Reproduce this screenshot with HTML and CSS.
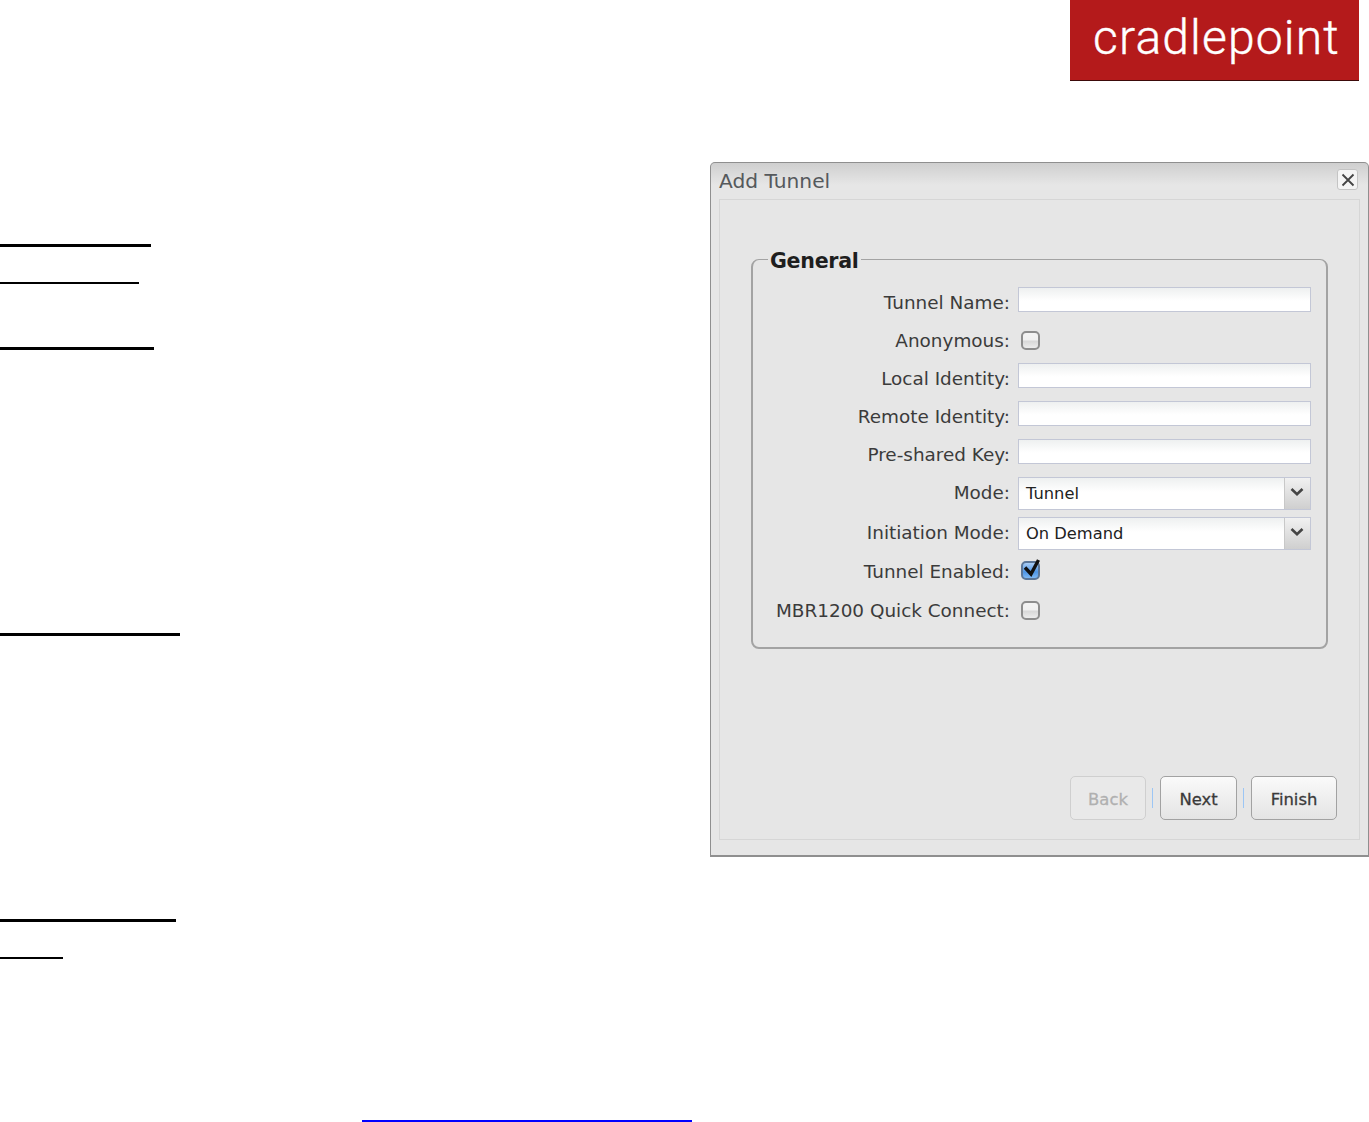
FILE: index.html
```html
<!DOCTYPE html>
<html lang="en">
<head>
<meta charset="utf-8">
<title>Add Tunnel</title>
<link rel="stylesheet" href="styles.css">
</head>
<body>
<header class="top">
  <div class="logo"><span class="logo-text">cradlepoint</span></div>
</header>
<main class="main">
  <div class="rules">
    <div class="rule r1"></div>
    <div class="rule r2"></div>
    <div class="rule r3"></div>
    <div class="rule r4"></div>
    <div class="rule r5"></div>
    <div class="rule r6"></div>
  </div>
  <section class="dialog">
    <div class="titlebar">
      <span class="title">Add Tunnel</span>
      <button class="close" type="button" aria-label="Close">
        <svg width="14" height="14" viewBox="0 0 14 14"><path d="M1.5 1.5 12.5 12.5M12.5 1.5 1.5 12.5" stroke="#444" stroke-width="1.8" fill="none"/></svg>
      </button>
    </div>
    <div class="panel">
      <fieldset class="group">
        <legend>General</legend>
        <div class="row"><label>Tunnel Name:</label><div class="ctl"><div class="input"></div></div></div>
        <div class="row"><label>Anonymous:</label><div class="ctl"><span class="check"></span></div></div>
        <div class="row"><label>Local Identity:</label><div class="ctl"><div class="input"></div></div></div>
        <div class="row"><label>Remote Identity:</label><div class="ctl"><div class="input"></div></div></div>
        <div class="row"><label>Pre-shared Key:</label><div class="ctl"><div class="input"></div></div></div>
        <div class="row row-sel"><label>Mode:</label><div class="ctl">
          <div class="select"><span class="sel-text">Tunnel</span><span class="sel-btn"><svg width="16" height="10" viewBox="0 0 16 10"><path d="M2.5 2 8 7.2 13.5 2" stroke="#444" stroke-width="2.6" fill="none"/></svg></span></div>
        </div></div>
        <div class="row row-sel2"><label>Initiation Mode:</label><div class="ctl">
          <div class="select"><span class="sel-text">On Demand</span><span class="sel-btn"><svg width="16" height="10" viewBox="0 0 16 10"><path d="M2.5 2 8 7.2 13.5 2" stroke="#444" stroke-width="2.6" fill="none"/></svg></span></div>
        </div></div>
        <div class="row row-sel2"><label>Tunnel Enabled:</label><div class="ctl">
          <span class="check on"><svg class="tick" width="20" height="24" viewBox="0 0 20 24"><path d="M3 11.5 9 18 16.5 4" stroke="#111" stroke-width="3.4" fill="none"/></svg></span>
        </div></div>
        <div class="row"><label>MBR1200 Quick Connect:</label><div class="ctl"><span class="check"></span></div></div>
      </fieldset>
      <div class="footer">
        <button class="btn btn-back" type="button" disabled>Back</button>
        <span class="sep"></span>
        <button class="btn btn-next" type="button">Next</button>
        <span class="sep"></span>
        <button class="btn btn-finish" type="button">Finish</button>
      </div>
    </div>
  </section>
</main>
<div class="linkrow"><a class="link" href="#"></a></div>
</body>
</html>
```
FILE: styles.css
```css
* { box-sizing: border-box; }
html, body { margin: 0; padding: 0; }
body {
  width: 1369px;
  height: 1122px;
  overflow: hidden;
  background: #fff;
  font-family: "DejaVu Sans", sans-serif;
}

/* header */
.top { display: flex; justify-content: flex-end; padding-right: 10px; height: 81px; }
.logo {
  width: 289px;
  height: 81px;
  padding-left: 4px;
  background: #b41a1b;
  border-bottom: 1px solid #3c0a0a;
  display: flex;
  justify-content: center;
  align-items: flex-start;
}
.logo-text {
  font-family: "Roboto", sans-serif;
  font-weight: 300;
  font-size: 48px;
  line-height: 75px;
  letter-spacing: 1.15px;
  color: #fff;
  -webkit-text-stroke: 0.4px #fff;
}

/* layout */
.main { display: flex; margin-top: 81px; align-items: flex-start; }
.rules { width: 710px; display: flex; flex-direction: column; }
.rule { background: #000; height: 3px; }
.r1 { width: 151px; margin-top: 82px; }
.r2 { width: 139px; margin-top: 35px; height: 2px; }
.r3 { width: 154px; margin-top: 63px; }
.r4 { width: 180px; margin-top: 283px; }
.r5 { width: 176px; margin-top: 283px; }
.r6 { width: 63px; margin-top: 35px; height: 2px; }

/* dialog */
.dialog {
  width: 659px;
  height: 695px;
  border: 1px solid #8f8f8f;
  border-bottom-width: 2px;
  border-radius: 5px 5px 0 0;
  background: linear-gradient(#cfcfcf 0, #e6e6e6 22px);
  display: flex;
  flex-direction: column;
}
.titlebar {
  height: 36px;
  padding: 6px 10px 0 8px;
  display: flex;
  justify-content: space-between;
  align-items: flex-start;
}
.title { font-size: 20.2px; line-height: 25px; color: #55595c; }
.close {
  width: 21px;
  height: 21px;
  padding: 0;
  border: 1px solid #c4c4c4;
  border-radius: 3px;
  background: #f4f4f4;
  display: flex;
  align-items: center;
  justify-content: center;
}
.panel {
  flex: 1;
  margin: 0 8px 15px;
  border: 1px solid #d6d6d6;
  padding: 44px 0 19px;
  display: flex;
  flex-direction: column;
}

/* fieldset */
.group {
  margin: 0 31px 0 31px;
  padding: 13px 15px 14px 0;
  border: 2px solid #a3a3a3;
  border-top-width: 1px;
  border-radius: 8px;
  min-width: 0;
}
.group legend {
  margin-left: 15px;
  padding: 4px 2px 0;
  font-size: 20.6px;
  line-height: 26px;
  font-weight: 700;
  color: #1e1e1e;
  letter-spacing: -0.3px;
}
.row { display: flex; height: 38px; align-items: flex-start; }
.row-sel { height: 40px; }
.row-sel2 { height: 39px; }
.row label {
  flex: 1;
  text-align: right;
  font-size: 18.4px;
  line-height: 32px;
  color: #3b3b3b;
  white-space: nowrap;
}
.ctl { width: 293px; margin-left: 8px; display: flex; align-items: flex-start; }
.input {
  width: 100%;
  height: 25px;
  border: 1px solid #c3c7d6;
  background: linear-gradient(#eef0f0, #fff 55%);
}
.check {
  position: relative;
  width: 19px;
  height: 19px;
  margin: 6px 0 0 3px;
  border: 2px solid #8d8d8d;
  border-radius: 5px;
  background: linear-gradient(#f3f3f3, #f0f0f0 45%, #d8d8d8 55%, #ececec);
}
.check.on {
  margin-top: 5px;
  border-color: #5b7698;
  background: linear-gradient(#a9cdf5, #4e95e6 60%, #7db8f4);
}
.tick { position: absolute; left: -1px; top: -7px; }
.select {
  width: 100%;
  height: 33px;
  border: 1px solid #c3c7d6;
  display: flex;
  background: linear-gradient(#eef0f0, #fff 45%);
}
.sel-text {
  flex: 1;
  padding-left: 7px;
  font-size: 16.3px;
  line-height: 32px;
  color: #222;
}
.sel-btn {
  width: 26px;
  border-left: 1px solid #c8c8c8;
  background: linear-gradient(#f1f1f1, #cfcfcf);
  display: flex;
  justify-content: center;
  padding: 9px 2px 0 0;
}

/* footer buttons */
.footer {
  margin-top: auto;
  padding-right: 22px;
  display: flex;
  justify-content: flex-end;
  align-items: center;
}
.btn {
  height: 44px;
  padding: 2px 0 0;
  border: 1px solid #a2a2a2;
  border-radius: 5px;
  background: linear-gradient(#fafafa, #e4e4e4);
  font-family: "DejaVu Sans", sans-serif;
  font-size: 16.4px;
  color: #3a3a3a;
  -webkit-text-stroke: 0.3px #3a3a3a;
}
.btn-back { width: 76px; border-color: #cfcfcf; background: #e9e9e9; color: #b0b0b0; -webkit-text-stroke: 0.3px #b0b0b0; }
.btn-next { width: 77px; }
.btn-finish { width: 86px; }
.sep { width: 1px; height: 20px; margin: 0 7px 0 6px; background: #9cc6f5; }

/* bottom link */
.linkrow { margin-top: 161px; padding-left: 362px; display: flex; }
.link { display: block; width: 330px; height: 2px; background: #0000ff; }
```
